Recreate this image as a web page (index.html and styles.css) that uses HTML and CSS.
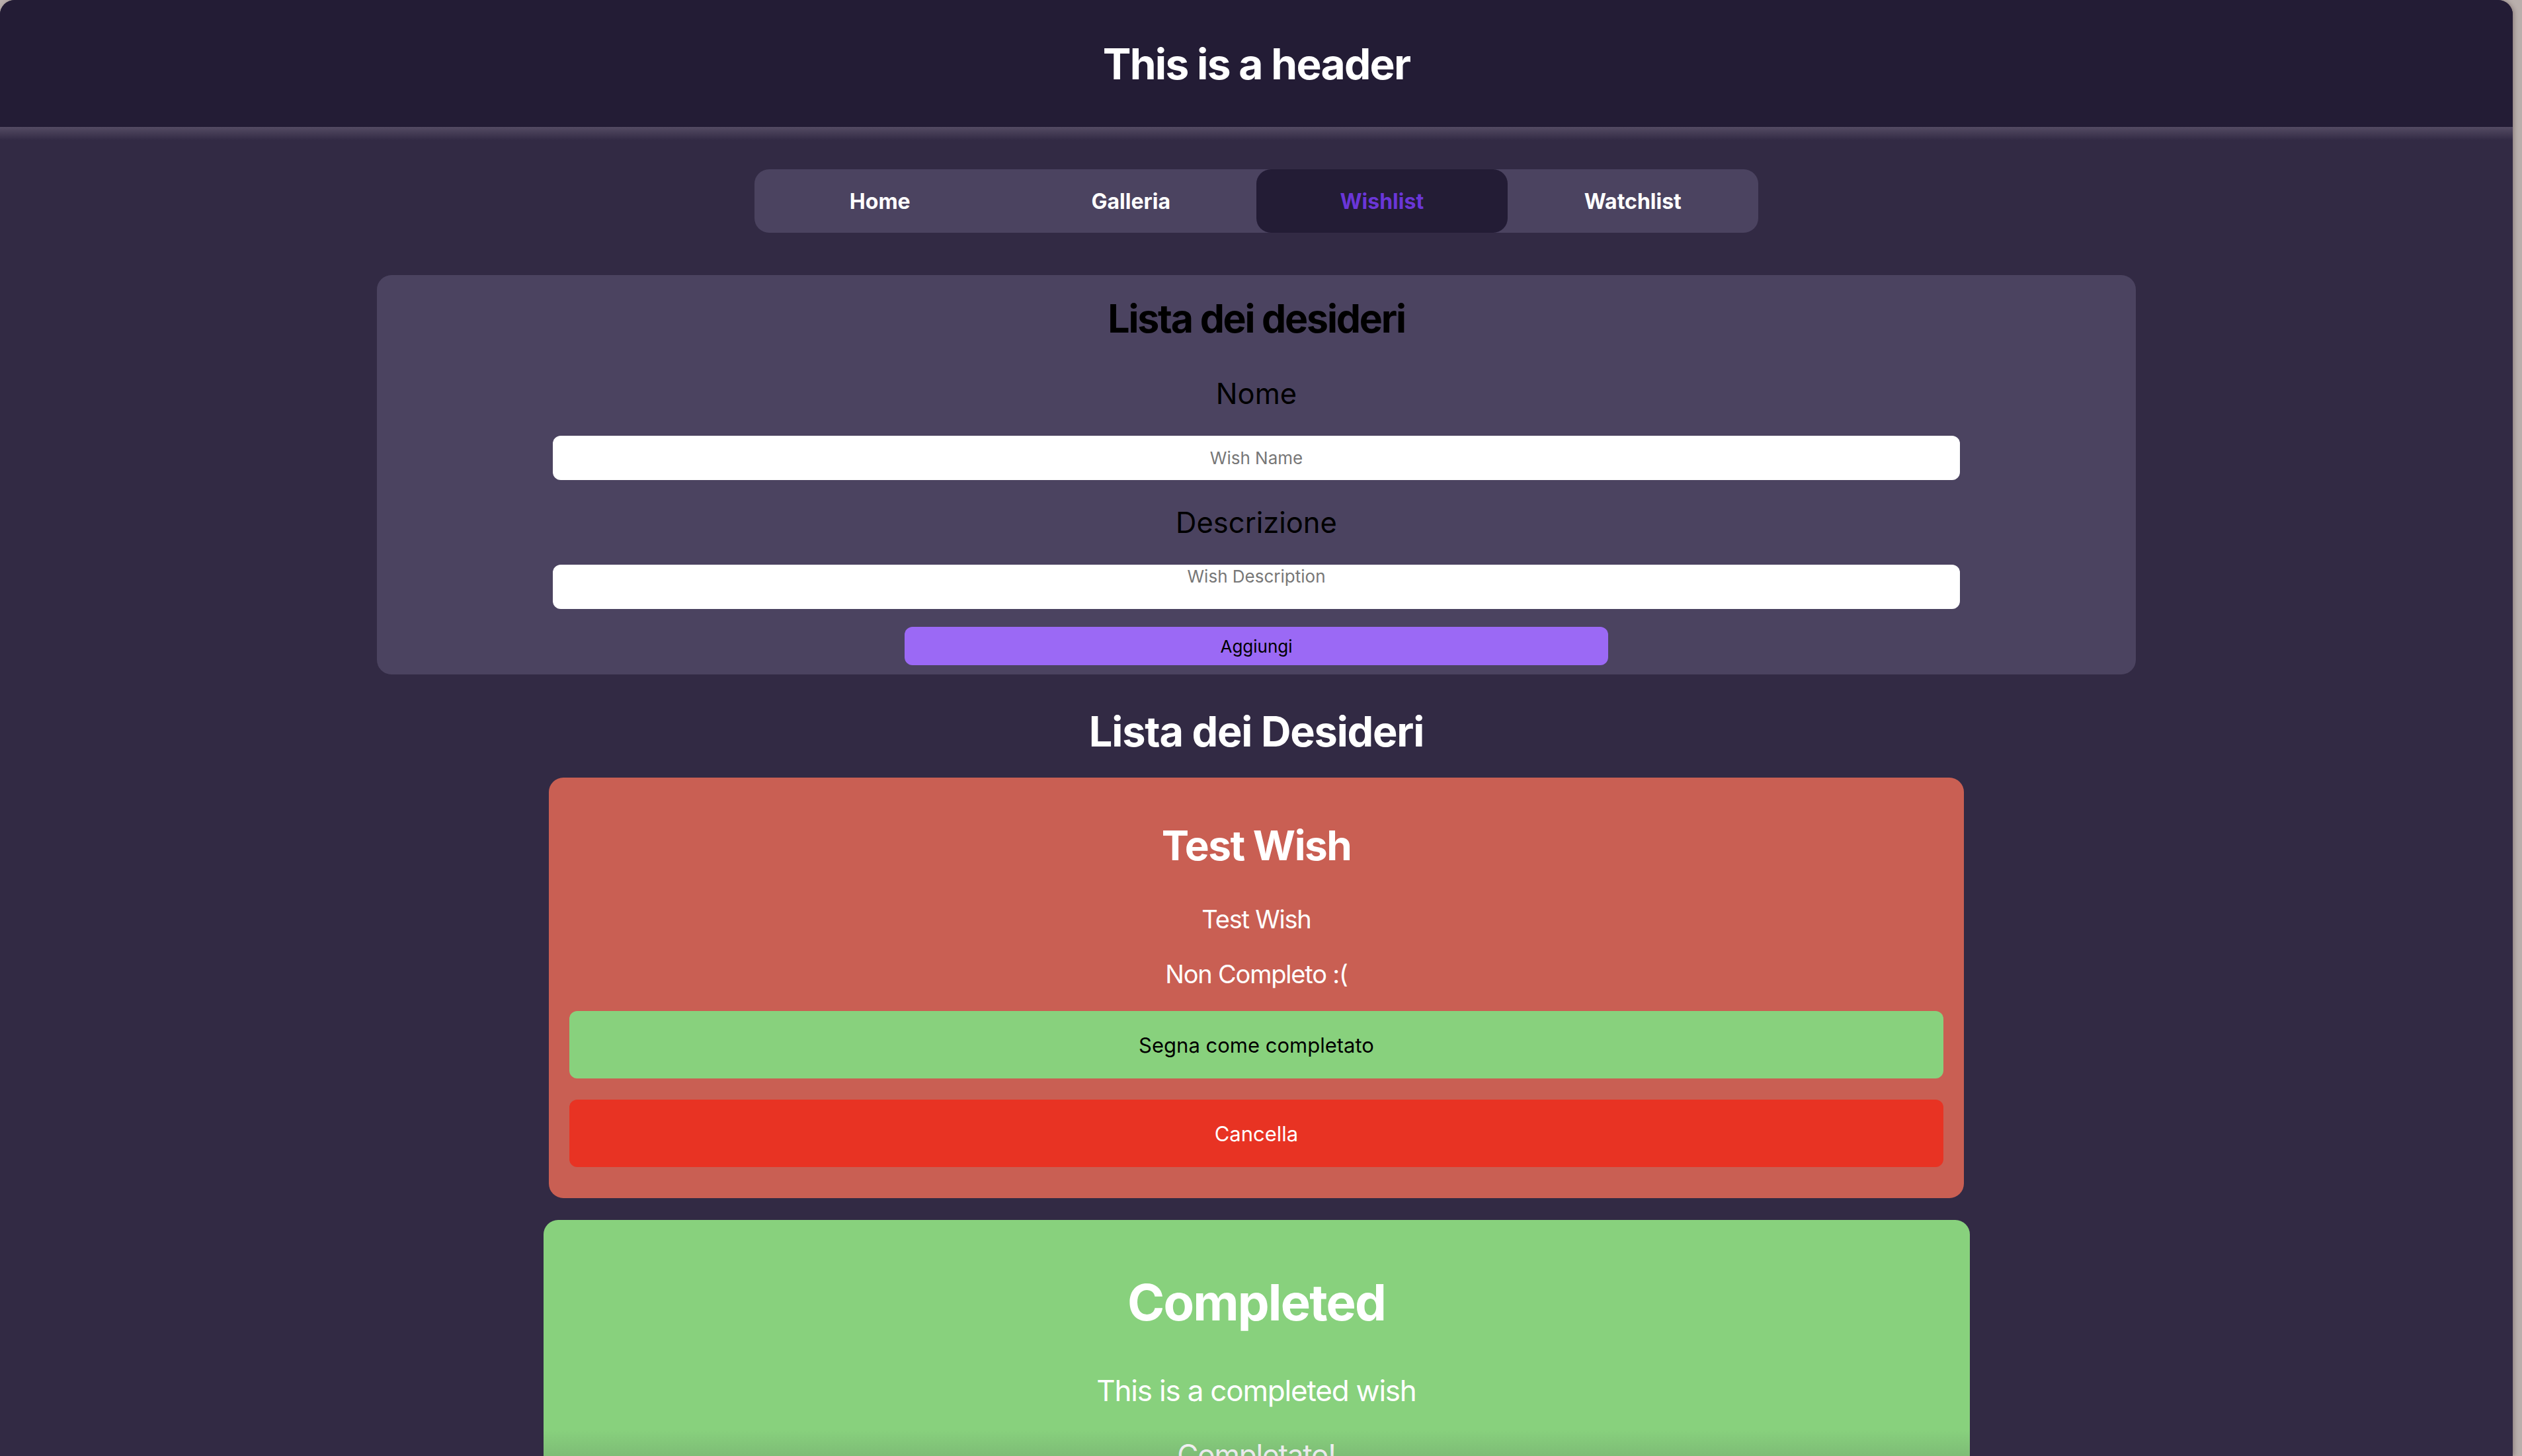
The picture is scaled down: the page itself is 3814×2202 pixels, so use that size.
FILE: index.html
```html
<!DOCTYPE html>
<html lang="it">
<head>
<meta charset="utf-8">
<title>Wishlist</title>
<link rel="stylesheet" href="styles.css">
</head>
<body>
<div class="window">
  <header class="top-header">
    <h1>This is a header</h1>
  </header>
  <main class="main">
    <nav class="tabs">
      <a class="tab">Home</a>
      <a class="tab">Galleria</a>
      <a class="tab active">Wishlist</a>
      <a class="tab">Watchlist</a>
    </nav>
    <section class="form-card">
      <h2 class="form-title">Lista dei desideri</h2>
      <label class="field-label first">Nome</label>
      <input class="field" type="text" placeholder="Wish Name">
      <label class="field-label">Descrizione</label>
      <textarea class="field area" placeholder="Wish Description"></textarea>
      <button class="add-btn">Aggiungi</button>
    </section>
    <h2 class="list-title">Lista dei Desideri</h2>
    <div class="wish-list">
      <article class="wish wish-open">
        <h3 class="wish-name">Test Wish</h3>
        <p class="wish-desc">Test Wish</p>
        <p class="wish-status">Non Completo :(</p>
        <button class="wish-btn done-btn">Segna come completato</button>
        <button class="wish-btn del-btn">Cancella</button>
      </article>
      <article class="wish wish-done">
        <h3 class="wish-name big">Completed</h3>
        <p class="wish-desc big">This is a completed wish</p>
        <p class="wish-status big">Completato!</p>
      </article>
    </div>
  </main>
  <div class="bottom-fade"></div>
</div>
</body>
</html>
```
FILE: styles.css
```css
html, body {
  margin: 0;
  padding: 0;
}
body {
  background: #b9afac;
  font-family: Inter, "Noto Sans", sans-serif;
  height: 2202px;
  overflow: hidden;
}
.window {
  position: relative;
  width: 3800px;
  height: 2202px;
  background: #322a44;
  border-radius: 22px 22px 0 0;
  overflow: hidden;
  box-shadow: 2px 0 6px rgba(60, 40, 40, 0.35);
}
.top-header {
  height: 192px;
  background: #231c35;
  display: flex;
  align-items: center;
  justify-content: center;
  padding-top: 3px;
  box-sizing: border-box;
}
.top-header h1 {
  margin: 0;
  color: #fff;
  font-size: 64px;
  font-weight: 700;
  line-height: 1.2;
  letter-spacing: -1.7px;
}
.main {
  background: linear-gradient(#544b63, #322a44 20px) no-repeat;
  display: flex;
  flex-direction: column;
  align-items: center;
  padding-top: 64px;
}
.tabs {
  display: flex;
  width: 1518px;
  height: 96px;
  background: #4b4360;
  border-radius: 22px;
}
.tab {
  flex: 1;
  display: flex;
  align-items: center;
  justify-content: center;
  color: #fff;
  font-size: 32px;
  font-weight: 700;
  border-radius: 22px;
}
.tab.active {
  background: #231c35;
  color: #6a36d8;
}
.form-card {
  margin-top: 64px;
  width: 2660px;
  box-sizing: border-box;
  background: #4b4360;
  border-radius: 22px;
  padding: 30px 0 14px;
  display: flex;
  flex-direction: column;
  align-items: center;
}
.form-title {
  margin: 0;
  font-size: 59px;
  font-weight: 700;
  line-height: 72px;
  color: #000;
  letter-spacing: -2.2px;
}
.field-label {
  font-size: 43.5px;
  line-height: 50px;
  color: #000;
  margin: 39px 0 39px;
}
.field-label.first {
  margin-top: 52px;
}
.field {
  width: 80%;
  height: 67px;
  box-sizing: border-box;
  border: none;
  border-radius: 12px;
  background: #fff;
  font-family: Inter, sans-serif;
  font-size: 26px;
  text-align: center;
  color: #000;
  padding: 0;
  margin: 0;
  outline: none;
}
.field::placeholder {
  color: #777;
}
.field.area {
  resize: none;
  padding-top: 2px;
  display: block;
}
.add-btn {
  margin-top: 27px;
  width: 40%;
  height: 58px;
  border: none;
  border-radius: 12px;
  background: #9b69f5;
  color: #000;
  font-family: Inter, sans-serif;
  font-size: 26px;
}
.list-title {
  margin: 49px 0 31px;
  font-size: 63px;
  font-weight: 700;
  line-height: 1.2;
  color: #fff;
  letter-spacing: -1.2px;
}
.wish-list {
  display: flex;
  flex-direction: column;
  align-items: center;
  gap: 33px;
}
.wish {
  width: 2140px;
  box-sizing: border-box;
  border-radius: 22px;
  display: flex;
  flex-direction: column;
  align-items: center;
  color: #fff;
}
.wish-open {
  background: #c95f53;
  padding: 66px 31px 47px;
}
.wish-done {
  width: 2157px;
  background: #88d17d;
  padding: 79px 31px 47px;
}
.wish-name {
  margin: 0;
  font-size: 62px;
  font-weight: 700;
  line-height: 1.2;
  letter-spacing: -1.5px;
}
.wish-desc {
  margin: 52px 0 0;
  font-size: 38px;
  line-height: 1.2;
  letter-spacing: -1.2px;
}
.wish-status {
  margin: 37px 0 0;
  font-size: 38px;
  line-height: 1.2;
  letter-spacing: -1.2px;
}
.wish-name.big {
  font-size: 76px;
  letter-spacing: -1.8px;
}
.wish-desc.big {
  margin-top: 62px;
  font-size: 44px;
  letter-spacing: -1.2px;
}
.wish-status.big {
  margin-top: 44px;
  font-size: 44px;
  letter-spacing: -1.2px;
}
.wish-btn {
  width: 100%;
  height: 102px;
  border: none;
  border-radius: 12px;
  font-family: Inter, sans-serif;
  font-size: 31px;
}
.done-btn {
  margin-top: 33px;
  background: #88d17d;
  color: #000;
}
.del-btn {
  margin-top: 32px;
  background: #e83323;
  color: #fff;
}
.bottom-fade {
  position: absolute;
  left: 0;
  right: 0;
  bottom: 0;
  height: 40px;
  background: linear-gradient(rgba(50, 42, 68, 0), rgba(50, 42, 68, 0.12));
  pointer-events: none;
}
```
